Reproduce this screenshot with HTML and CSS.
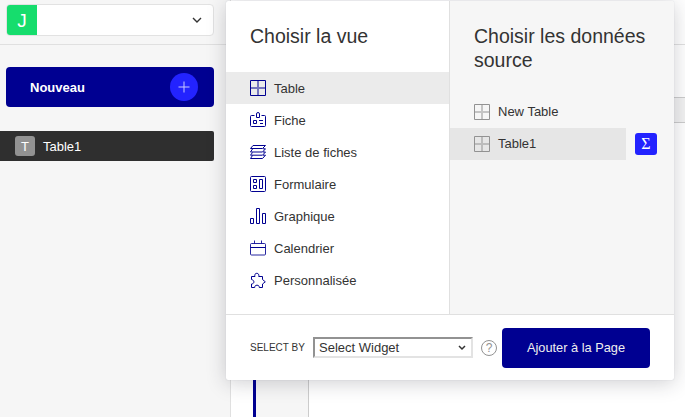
FILE: index.html
```html
<!DOCTYPE html>
<html lang="fr">
<head>
<meta charset="utf-8">
<title>Table1</title>
<link rel="stylesheet" href="styles.css">
</head>
<body>
<svg class="defs" aria-hidden="true">
  <symbol id="grid" viewBox="0 0 16 16"><path d="M.5.5h15v15H.5z"/><path d="M8 1v14M1 8h14" opacity=".5" stroke-width="2"/></symbol>
</svg>
<div class="app">
  <aside class="sidebar">
    <div class="sidebar-head">
      <div class="org"><span class="org-logo">J</span>
        <svg class="chevron" width="10" height="6" viewBox="0 0 10 6"><path d="M1 1l4 4 4-4"/></svg>
      </div>
    </div>
    <div class="new-btn"><span class="new-label">Nouveau</span>
      <span class="plus"><svg width="12" height="12" viewBox="0 0 12 12"><path d="M6 .5v11M.5 6h11"/></svg></span>
    </div>
    <div class="page"><span class="page-initial">T</span><span class="page-name">Table1</span></div>
  </aside>
  <main class="main">
    <div class="topbar"></div>
    <div class="body">
      <div class="cursor"></div>
      <div class="rownums"></div>
      <div class="cells"><div class="colheads"></div></div>
    </div>
  </main>
</div>

<div class="dialog">
  <div class="panes">
    <section class="pane views">
      <h2>Choisir la vue</h2>
      <div class="item selected"><svg class="icon"><use href="#grid"/></svg><span>Table</span></div>
      <div class="item"><svg class="icon" viewBox="0 0 16 16"><path d="M4.500 3.500h-3a1 1 0 0 0-1 1v9a1 1 0 0 0 1 1h13a1 1 0 0 0 1-1v-9a1 1 0 0 0-1-1h-3M6.500 2a1.500 1.500 0 0 1 3 0v3.500h-3zM3.500 8.500h3v3h-3zM9 8.500h4M10 11.500h3"/></svg><span>Fiche</span></div>
      <div class="item"><svg class="icon" viewBox="0 0 16 16"><path d="M3 1.500h12.500l-3 3H.5zM2.500 5L.5 8h12l3-3.200H13M2.500 8.500l-2 2.700h12l3-3.200H13M2.500 11.500l-2 3h12l3-3.300H13"/></svg><span>Liste de fiches</span></div>
      <div class="item"><svg class="icon" viewBox="0 0 16 16"><rect x=".5" y=".5" width="15" height="15" rx="1"/><path d="M3.500 3.500h3v3h-3zM3.500 9.500h3v3h-3zM9.500 3.500h3v9h-3z"/></svg><span>Formulaire</span></div>
      <div class="item"><svg class="icon" viewBox="0 0 16 16"><path d="M.5 10.500h3v5h-3zM6.500.5h3v15h-3zM12.500 5.500h3v10h-3z"/></svg><span>Graphique</span></div>
      <div class="item"><svg class="icon" viewBox="0 0 16 16"><rect x=".5" y="3.500" width="15" height="11.500" rx="1" opacity=".85"/><path d="M.5 7.500h15"/><path d="M4.500.5v3M11.500.5v3" opacity=".85"/></svg><span>Calendrier</span></div>
      <div class="item"><svg class="icon" viewBox="0 0 16 16"><path d="M1.500 4.500H5C4.300 2.700 5.200 1.300 6.800 1.300S9.300 2.700 8.700 4.500h3.800V7.500l2.800 2.300-2.800 2.200v3.500H9.300c0-1.500-.8-2.300-2.300-2.300s-2.300.8-2.300 2.300H1.500V12c1.700-.2 2.400-1 2.400-2.100s-.7-1.900-2.400-2.400z"/></svg><span>Personnalisée</span></div>
    </section>
    <section class="pane source">
      <h2>Choisir les données source</h2>
      <div class="row"><div class="item"><svg class="icon"><use href="#grid"/></svg>New Table</div></div>
      <div class="row"><div class="item selected"><svg class="icon"><use href="#grid"/></svg>Table1</div>
        <span class="sum">Σ</span></div>
    </section>
  </div>
  <footer class="footer">
    <label for="by">SELECT BY</label>
    <div class="select">
      <select id="by"><option>Select Widget</option></select>
      <svg class="select-arrow" width="8" height="6" viewBox="0 0 8 6"><path d="M1 1l3 3 3-3"/></svg>
    </div>
    <span class="help">?</span>
    <button class="add">Ajouter à la Page</button>
  </footer>
</div>
</body>
</html>
```
FILE: styles.css
```css
* { box-sizing: border-box; }
body { margin: 0; height: 417px; overflow: hidden; background: #fff; color: #333; font: 13px/16px "Liberation Sans", Arial, sans-serif; }
svg { fill: none; stroke: currentColor; flex: none; }
.defs { position: absolute; width: 0; height: 0; }
.app { display: flex; height: 417px; }

.sidebar { width: 231px; background: #f6f6f6; border-right: 1px solid #e0e0e0; }
.sidebar-head { height: 45px; padding: 4px 16px 0 6px; border-bottom: 1px solid #e0e0e0; }
.org { display: flex; align-items: center; justify-content: space-between; height: 32px; padding-right: 11px; background: #fff; border: 1px solid #e2e2e2; border-radius: 4px; }
.org-logo { width: 30px; height: 30px; border-radius: 3px 0 0 3px; background: #16dd6d; color: #fff; font-size: 19px; line-height: 32px; text-align: center; }
.chevron { color: #333; stroke-width: 1.4; }
.new-btn { display: flex; align-items: center; justify-content: space-between; width: 208px; height: 40px; margin: 22px 0 24px 6px; padding: 0 16px 0 24px; border-radius: 4px; background: #000091; color: #fff; font-weight: bold; }
.new-label, .page-name, .views .item span { padding-top: 2px; }
.plus { display: flex; align-items: center; justify-content: center; width: 28px; height: 28px; border-radius: 50%; background: #2323ff; color: #c8c8ff; }
.page { display: flex; align-items: center; gap: 8px; width: 214px; height: 30px; padding-left: 15px; background: #2f2f2f; color: #fff; border-radius: 0 2px 2px 0; }
.page-initial { width: 20px; height: 20px; border-radius: 3px; background: #929292; line-height: 21px; text-align: center; }

.main { flex: 1; display: flex; flex-direction: column; }
.topbar { height: 45px; border-bottom: 1px solid #e0e0e0; }
.body { flex: 1; display: flex; padding: 52px 0 0 22px; }
.cursor { width: 3px; background: #000091; }
.rownums { width: 53px; background: #f6f6f6; border-right: 1px solid #ccc; }
.cells { flex: 1; }
.colheads { height: 26px; background: #f2f2f2; border: solid #ccc; border-width: 1px 0; }

.dialog { position: absolute; left: 226px; top: 1px; width: 448px; height: 379px; display: flex; flex-direction: column; background: #fff; border-radius: 2px; box-shadow: 0 3px 20px rgba(38,38,51,.22), 0 0 1px rgba(76,86,103,.3); }
.panes { flex: 1; display: flex; border-bottom: 1px solid #e0e0e0; }
.pane { width: 224px; border-right: 1px solid #e0e0e0; }
.source { background: #f6f6f6; border-right: 0; border-top-right-radius: 2px; }
h2 { margin: 0; padding: 23px 24px; font-size: 19.5px; line-height: 24px; font-weight: 400; height: 71px; }
.source h2 { height: 95px; padding-right: 10px; }
.item { display: flex; align-items: center; gap: 8px; height: 32px; padding-left: 24px; }
.item.selected { background: #ebebeb; }
.icon { width: 16px; height: 16px; color: #000091; }
.row { display: flex; align-items: center; gap: 9px; }
.row .item { width: 176px; }
.row .item.selected { background: #e6e6e6; }
.row .icon { color: #929292; }
.sum { width: 22px; height: 22px; border-radius: 3px; background: #2323ff; color: #fff; font: 16px/22px "Liberation Serif", serif; text-align: center; }
.footer { display: flex; align-items: center; height: 65px; padding: 0 24px; }
.footer label { width: 63px; font-size: 10px; white-space: nowrap; }
.select { position: relative; width: 160px; height: 21px; }
select { display: block; appearance: none; width: 160px; height: 21px; padding: 0 4px; border: 2px solid; border-color: #929292 #e3e3e3 #e3e3e3 #929292; background: #fff; color: #333; font: 13px "Liberation Sans", Arial, sans-serif; border-radius: 0; }
.select-arrow { position: absolute; right: 7px; top: 8px; stroke-width: 1.5; }
.help { width: 16px; height: 16px; margin: 0 5px 0 8px; border: 1px solid #929292; border-radius: 50%; color: #929292; font-size: 12px; line-height: 15px; text-align: center; }
.add { width: 148px; height: 40px; padding: 0; border: 0; border-radius: 4px; background: #000091; color: #eee; font: 12.8px "Liberation Sans", Arial, sans-serif; }
```
